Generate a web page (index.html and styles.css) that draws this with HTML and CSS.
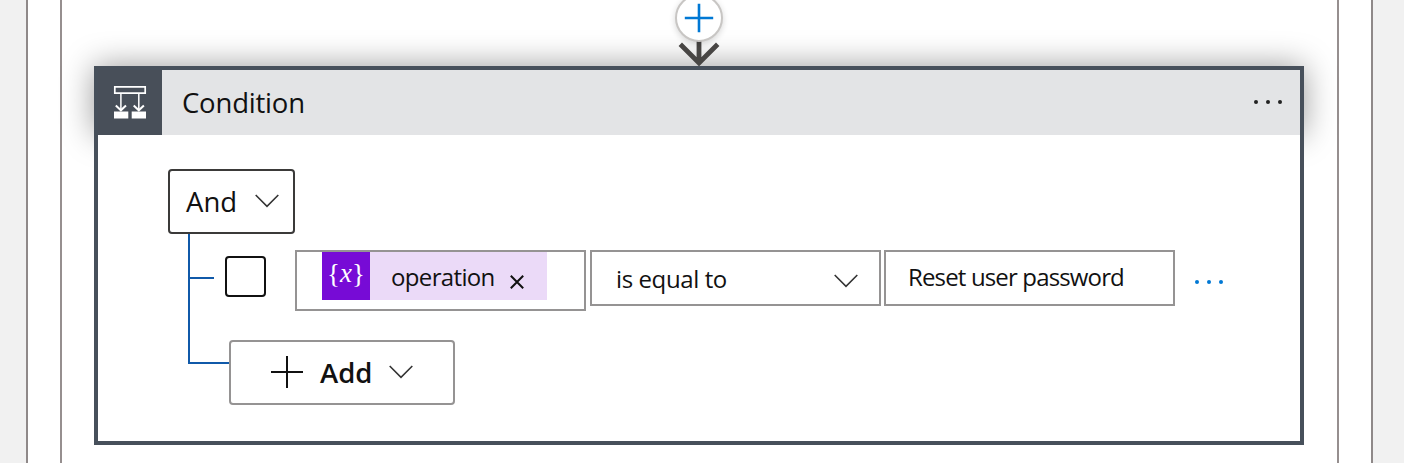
FILE: index.html
```html
<!DOCTYPE html>
<html lang="en">
<head>
<meta charset="utf-8">
<title>Condition</title>
<link rel="stylesheet" href="styles.css">
</head>
<body>
<div class="outer-scope">
  <div class="inner-scope">
    <div class="connector">
      <svg width="60" height="66" viewBox="0 0 60 66">
        <path d="M30 40V63M11.300 44.300L30 63L48.700 44.300" fill="none" stroke="#484644" stroke-width="4.800"/>
      </svg>
      <button class="insert" aria-label="Insert step">
        <svg width="30" height="30" viewBox="0 0 30 30"><path d="M15 .800V29.200M.800 15H29.200" stroke="#0078d4" stroke-width="2.600"/></svg>
      </button>
    </div>
    <section class="card">
      <header class="card-header">
        <div class="card-icon">
          <svg width="34" height="34" viewBox="0 0 34 34" fill="none" stroke="#fff">
            <path d="M1.800 1.900H32.200V8.100H1.800Z" stroke-width="1.700"/>
            <path d="M7.900 8.500V25M25.800 8.500V25" stroke-width="1.500"/>
            <path d="M2.800 20.500L7.900 25.300L13 20.500M20.700 20.500L25.800 25.300L30.900 20.500" stroke-width="2"/>
            <path d="M1 26.500H15.300V33.500H1ZM18.700 26.500H33V33.500H18.700Z" fill="#fff" stroke="none"/>
          </svg>
        </div>
        <h1 class="card-title">Condition</h1>
        <div class="dots dots-dark"><i></i><i></i><i></i></div>
      </header>
      <div class="card-body">
        <button class="and-button"><span>And</span>
          <svg class="chevron" width="24" height="14" viewBox="0 0 24 14"><path d="M.700 1L12 12.300L23.300 1"/></svg>
        </button>
        <div class="tree">
          <div class="rail"><div class="tick"></div></div>
          <div class="branches">
            <div class="row">
              <span class="checkbox" role="checkbox" aria-checked="false"></span>
              <div class="field operand">
                <span class="token">
                  <span class="token-icon"><span>{</span><em>x</em><span>}</span></span>
                  <span class="token-label">operation</span>
                  <svg class="token-close" width="14" height="14" viewBox="0 0 14 14"><path d="M.800.800L13.200 13.200M13.200.800L.800 13.200" stroke="#111" stroke-width="2"/></svg>
                </span>
              </div>
              <div class="field operator"><span>is equal to</span>
                <svg class="chevron" width="24" height="14" viewBox="0 0 24 14"><path d="M.700 1L12 12.300L23.300 1"/></svg>
              </div>
              <div class="field value"><span>Reset user password</span></div>
              <div class="dots dots-blue"><i></i><i></i><i></i></div>
            </div>
            <button class="add-button">
              <svg width="34" height="34" viewBox="0 0 34 34"><path d="M17 1V33M1 17H33" stroke="#111" stroke-width="2"/></svg>
              <span>Add</span>
              <svg class="chevron" width="24" height="14" viewBox="0 0 24 14"><path d="M.700 1L12 12.300L23.300 1"/></svg>
            </button>
          </div>
        </div>
      </div>
    </section>
  </div>
</div>
</body>
</html>
```
FILE: styles.css
```css
* { box-sizing: border-box; }
body {
  margin: 0;
  height: 463px;
  overflow: hidden;
  padding: 0 31px 0 26px;
  background: #f1f1f1;
  color: #111;
  font-family: "Open Sans", "Noto Sans", sans-serif;
}
button {
  font: inherit;
  color: inherit;
  background: #fff;
  padding: 0;
}
svg { display: block; flex: none; }
.outer-scope {
  height: 100%;
  padding: 0 32px;
  background: #fff;
  border: solid #8f8989;
  border-width: 0 2px;
}
.inner-scope {
  height: 100%;
  padding: 0 32px;
  border: solid #968f8f;
  border-width: 0 2px;
}
.connector {
  position: relative;
  z-index: 1;
  width: 1210px;
  height: 66px;
  display: flex;
  justify-content: center;
}
.insert {
  position: absolute;
  top: -6px;
  left: 50%;
  margin-left: -24px;
  width: 48px;
  height: 48px;
  display: grid;
  place-items: center;
  border: 2px solid #c8c6c4;
  border-radius: 50%;
  box-shadow: 0 2px 6px rgba(0, 0, 0, .16);
}
.card { width: 1210px; }
.card-header {
  height: 69px;
  display: flex;
  align-items: center;
  background: #e3e4e6;
  border: 4px solid #47505b;
  border-bottom: 0;
  box-shadow: 0 0 32px rgba(0, 0, 0, .4);
}
.card-icon {
  width: 64px;
  align-self: stretch;
  display: grid;
  place-items: center;
  padding-bottom: 2px;
  background: #484f59;
}
.card-title {
  flex: 1;
  margin: 1px 0 0 20px;
  font-size: 27.500px;
  letter-spacing: -.2px;
  line-height: 36px;
  font-weight: 400;
}
.dots { display: flex; gap: 8px; }
.dots i {
  width: 4px;
  height: 4px;
  border-radius: 50%;
  background: #222;
}
.dots-dark { margin: 0 18px 1px 0; }
.card-body {
  position: relative;
  height: 310px;
  padding: 34px 0 0 70px;
  background: #fff;
  border: 4px solid #47505b;
  border-top: 0;
}
.chevron { fill: none; stroke: #333; stroke-width: 1.600px; }
.and-button {
  width: 127px;
  height: 65px;
  display: flex;
  align-items: center;
  justify-content: space-between;
  padding: 0 14px 0 16px;
  border: 2px solid #3b3a39;
  border-radius: 4px;
  font-size: 27.500px;
}
.and-button .chevron { margin-bottom: 1px; }
.tree { display: flex; margin-left: 20px; }
.rail {
  flex: none;
  width: 41px;
  height: 130px;
  padding-top: 43px;
  border: solid #1059a9;
  border-width: 0 0 2px 2px;
}
.tick { width: 24px; height: 2px; background: #1059a9; }
.branches { padding-top: 16px; }
.row {
  height: 61px;
  display: flex;
  align-items: flex-start;
  margin-left: -4px;
  font-size: 24px;
}
.checkbox {
  width: 41px;
  height: 41px;
  margin: 6px 29px 0 0;
  border: 2px solid #111;
  border-radius: 4px;
}
.field {
  width: 291px;
  height: 56px;
  display: flex;
  align-items: center;
  border: 2px solid #959393;
  white-space: nowrap;
}
.operand { height: 61px; align-items: flex-start; padding-left: 25px; }
.token {
  width: 225px;
  height: 48px;
  display: flex;
  align-items: center;
  background: #ebdaf8;
}
.token-icon {
  width: 48px;
  height: 48px;
  display: flex;
  justify-content: center;
  align-items: center;
  padding-bottom: 4px;
  background: #770bd6;
  color: #fff;
  font: 27px/1 "Liberation Serif", serif;
}
.token-icon em { margin-top: -2px; }
.token-label { margin: 1px 0 0 21px; letter-spacing: -.65px; }
.token-close { margin: 12px 0 0 15px; }
.operator {
  margin-left: 4px;
  padding: 0 21px 0 24px;
  justify-content: space-between;
  letter-spacing: -.4px;
}
.operator .chevron { margin-top: 5px; }
.value {
  margin-left: 3px;
  padding: 0 0 3px 22px;
  letter-spacing: -.85px;
}
.dots-blue { margin: 30px 0 0 20px; }
.dots-blue i { background: #0078d4; }
.add-button {
  width: 226px;
  height: 65px;
  margin-top: 29px;
  display: flex;
  align-items: center;
  padding-left: 39px;
  border: 2px solid #959393;
  border-radius: 4px;
  font-size: 27.500px;
  font-weight: 600;
}
.add-button svg { margin-bottom: 1px; }
.add-button span { margin: 0 17px 0 16px; }
```
